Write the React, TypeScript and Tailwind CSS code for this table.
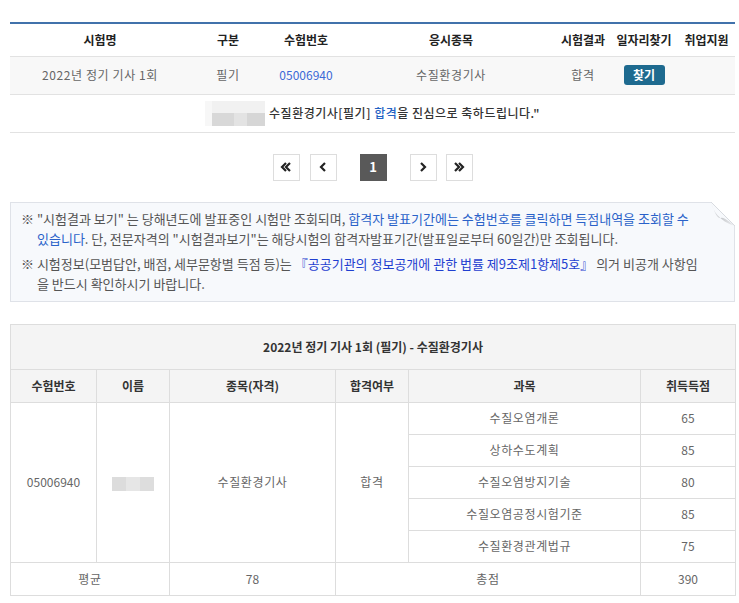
import type { ReactNode } from 'react';

const FONT = '"Noto Sans CJK KR", "Noto Sans", sans-serif';

const subjects = [
  { name: '수질오염개론', score: 65 },
  { name: '상하수도계획', score: 85 },
  { name: '수질오염방지기술', score: 80 },
  { name: '수질오염공정시험기준', score: 85 },
  { name: '수질환경관계법규', score: 75 },
];

// Blurred-out name blocks (privacy mask in the original page).
function Masked({ wide }: { wide?: boolean }) {
  if (wide) {
    return (
      <span className="inline-flex h-[25px] w-[60px] flex-col align-middle">
        <span className="flex h-[12px]">
          <span className="w-[7px] bg-[#f7f7f7]" />
          <span className="flex-1 bg-[#f1f1f1]" />
        </span>
        <span className="flex flex-1">
          <span className="w-[7px] bg-[#f7f7f7]" />
          <span className="w-[22px] bg-[#d8d8d8]" />
          <span className="w-[13px] bg-[#e3e3e3]" />
          <span className="flex-1 bg-[#d6d6d6]" />
        </span>
      </span>
    );
  }
  return (
    <span className="inline-flex h-[14px] w-[42px] align-middle">
      <span className="w-[14px] bg-[#dcdcdc]" />
      <span className="w-[14px] bg-[#e6e6e6]" />
      <span className="flex-1 bg-[#dddddd]" />
    </span>
  );
}

function PageBtn({ children, active }: { children: ReactNode; active?: boolean }) {
  return (
    <button
      type="button"
      className={
        active
          ? 'flex h-[27px] w-[27px] items-center justify-center bg-[#595959] text-[13px] font-bold text-white'
          : 'flex h-[27px] w-[27px] items-center justify-center border border-[#dddddd] bg-white text-[#222]'
      }
    >
      {children}
    </button>
  );
}

function Chevron({ dir, double }: { dir: 'left' | 'right'; double?: boolean }) {
  const pts = dir === 'left' ? '7,2 3,6 7,10' : '3,2 7,6 3,10';
  return (
    <svg width={double ? 14 : 10} height="12" viewBox={double ? '0 0 14 12' : '0 0 10 12'}>
      <polyline points={pts} fill="none" stroke="#222" strokeWidth="2.2" />
      {double && (
        <polyline
          points={dir === 'left' ? '11,2 7,6 11,10' : '7,2 11,6 7,10'}
          fill="none"
          stroke="#222"
          strokeWidth="2.2"
        />
      )}
    </svg>
  );
}

export default function App() {
  const th = 'h-[33px] text-[12px] font-bold text-[#222] whitespace-nowrap';
  const td =
    'h-[38px] border-t border-[#e2e2e2] bg-[#f8f8f8] text-[12px] tracking-[0.6px] text-[#666] whitespace-nowrap';
  const cell = 'border border-[#dddddd] text-center text-[12px] tracking-[0.6px] text-[#666]';
  const head = 'border border-[#dddddd] bg-[#f4f4f4] text-center text-[12px] font-bold text-[#333]';

  return (
    <div className="min-h-[603px] bg-white pt-[22px]" style={{ fontFamily: FONT }}>
      <div className="ml-[10px] w-[725px]">
        {/* exam list */}
        <table className="w-full table-fixed border-collapse border-t-2 border-[#4172ab] text-center">
          <colgroup>
            <col className="w-[180px]" />
            <col className="w-[76px]" />
            <col className="w-[80px]" />
            <col className="w-[210px]" />
            <col className="w-[54px]" />
            <col className="w-[68px]" />
            <col className="w-[57px]" />
          </colgroup>
          <thead>
            <tr>
              <th className={th}>시험명</th>
              <th className={th}>구분</th>
              <th className={th}>수험번호</th>
              <th className={th}>응시종목</th>
              <th className={th}>시험결과</th>
              <th className={th}>일자리찾기</th>
              <th className={th}>취업지원</th>
            </tr>
          </thead>
          <tbody>
            <tr>
              <td className={td}>2022년 정기 기사 1회</td>
              <td className={td}>필기</td>
              <td className={td}>
                <span className="tracking-normal text-[#3b69d6]">05006940</span>
              </td>
              <td className={td}>수질환경기사</td>
              <td className={td}>합격</td>
              <td className={td}>
                <span className="inline-flex h-[20px] w-[41px] items-center justify-center rounded-[3px] bg-[#1e6a8f] text-[12px] font-bold tracking-normal text-white">
                  찾기
                </span>
              </td>
              <td className={td} />
            </tr>
            <tr>
              <td colSpan={7} className="h-[38px] border-y border-[#e2e2e2] text-[12px] font-medium text-[#333]">
                <Masked wide />
                <span className="ml-[4px] align-middle tracking-[0.5px]">
                  수질환경기사[필기] <span className="text-[#2463c4]">합격</span>을 진심으로 축하드립니다."
                </span>
              </td>
            </tr>
          </tbody>
        </table>

        {/* pagination */}
        <div className="mt-[21px] flex justify-center">
          <div className="flex items-center">
            <PageBtn>
              <Chevron dir="left" double />
            </PageBtn>
            <span className="ml-[10px]">
              <PageBtn>
                <Chevron dir="left" />
              </PageBtn>
            </span>
            <span className="mx-[23px]">
              <PageBtn active>1</PageBtn>
            </span>
            <PageBtn>
              <Chevron dir="right" />
            </PageBtn>
            <span className="ml-[9px]">
              <PageBtn>
                <Chevron dir="right" double />
              </PageBtn>
            </span>
          </div>
        </div>

        {/* notice */}
        <div className="relative mt-[21px] border border-[#dfe2e8] bg-[#f7f9fc] pb-[7px] pl-[26px] pr-[40px] pt-[6px] text-[13px] leading-[20px] text-[#555]">
          <p className="-indent-[16px]">
            ※ "시험결과 보기" 는 당해년도에 발표중인 시험만 조회되며,{' '}
            <span className="text-[#2a62c9]">합격자 발표기간에는 수험번호를 클릭하면 득점내역을 조회할 수 있습니다</span>. 단,
            전문자격의 "시험결과보기"는 해당시험의 합격자발표기간(발표일로부터 60일간)만 조회됩니다.
          </p>
          <p className="-mr-[10px] mt-[5px] -indent-[16px]">
            ※ 시험정보(모범답안, 배점, 세부문항별 득점 등)는{' '}
            <span className="text-[#1f3fd0]">『공공기관의 정보공개에 관한 법률 제9조제1항제5호』</span> 의거 비공개 사항임을 반드시
            확인하시기 바랍니다.
          </p>
          {/* folded corner */}
          <svg className="absolute -right-px -top-px" width="24" height="24" viewBox="0 0 24 24">
            <defs>
              <linearGradient id="fold" x1="0" y1="0" x2="1" y2="1">
                <stop offset="0" stopColor="#eceef1" />
                <stop offset="0.55" stopColor="#c9cbce" />
                <stop offset="1" stopColor="#eef0f3" />
              </linearGradient>
            </defs>
            <polygon points="0,0 24,0 24,24" fill="#ffffff" />
            <path d="M0,0 C2,9 8,19 24,24 C17,19 13,15 10,16 C6,17 3,9 0,0 Z" fill="url(#fold)" />
            <path d="M0,0 L24,24" stroke="#d8dbe0" strokeWidth="1" fill="none" />
          </svg>
        </div>

        {/* score detail */}
        <table className="mt-[22px] w-full table-fixed border-collapse">
          <colgroup>
            <col className="w-[86px]" />
            <col className="w-[73px]" />
            <col className="w-[166px]" />
            <col className="w-[73px]" />
            <col className="w-[232px]" />
            <col className="w-[95px]" />
          </colgroup>
          <thead>
            <tr>
              <th colSpan={6} className={`${head} h-[45px]`}>
                2022년 정기 기사 1회 (필기) - 수질환경기사
              </th>
            </tr>
            <tr>
              <th className={`${head} h-[33px]`}>수험번호</th>
              <th className={head}>이름</th>
              <th className={head}>종목(자격)</th>
              <th className={head}>합격여부</th>
              <th className={head}>과목</th>
              <th className={head}>취득득점</th>
            </tr>
          </thead>
          <tbody>
            {subjects.map((s, i) => (
              <tr key={s.name}>
                {i === 0 && (
                  <>
                    <td rowSpan={5} className={`${cell} tracking-normal`}>
                      05006940
                    </td>
                    <td rowSpan={5} className={cell}>
                      <Masked />
                    </td>
                    <td rowSpan={5} className={cell}>
                      수질환경기사
                    </td>
                    <td rowSpan={5} className={cell}>
                      합격
                    </td>
                  </>
                )}
                <td className={`${cell} h-[32px]`}>{s.name}</td>
                <td className={`${cell} tracking-normal`}>{s.score}</td>
              </tr>
            ))}
            <tr>
              <td colSpan={2} className={`${cell} h-[33px]`}>
                평균
              </td>
              <td className={`${cell} tracking-normal`}>78</td>
              <td colSpan={2} className={cell}>
                총점
              </td>
              <td className={`${cell} tracking-normal`}>390</td>
            </tr>
          </tbody>
        </table>
      </div>
    </div>
  );
}
